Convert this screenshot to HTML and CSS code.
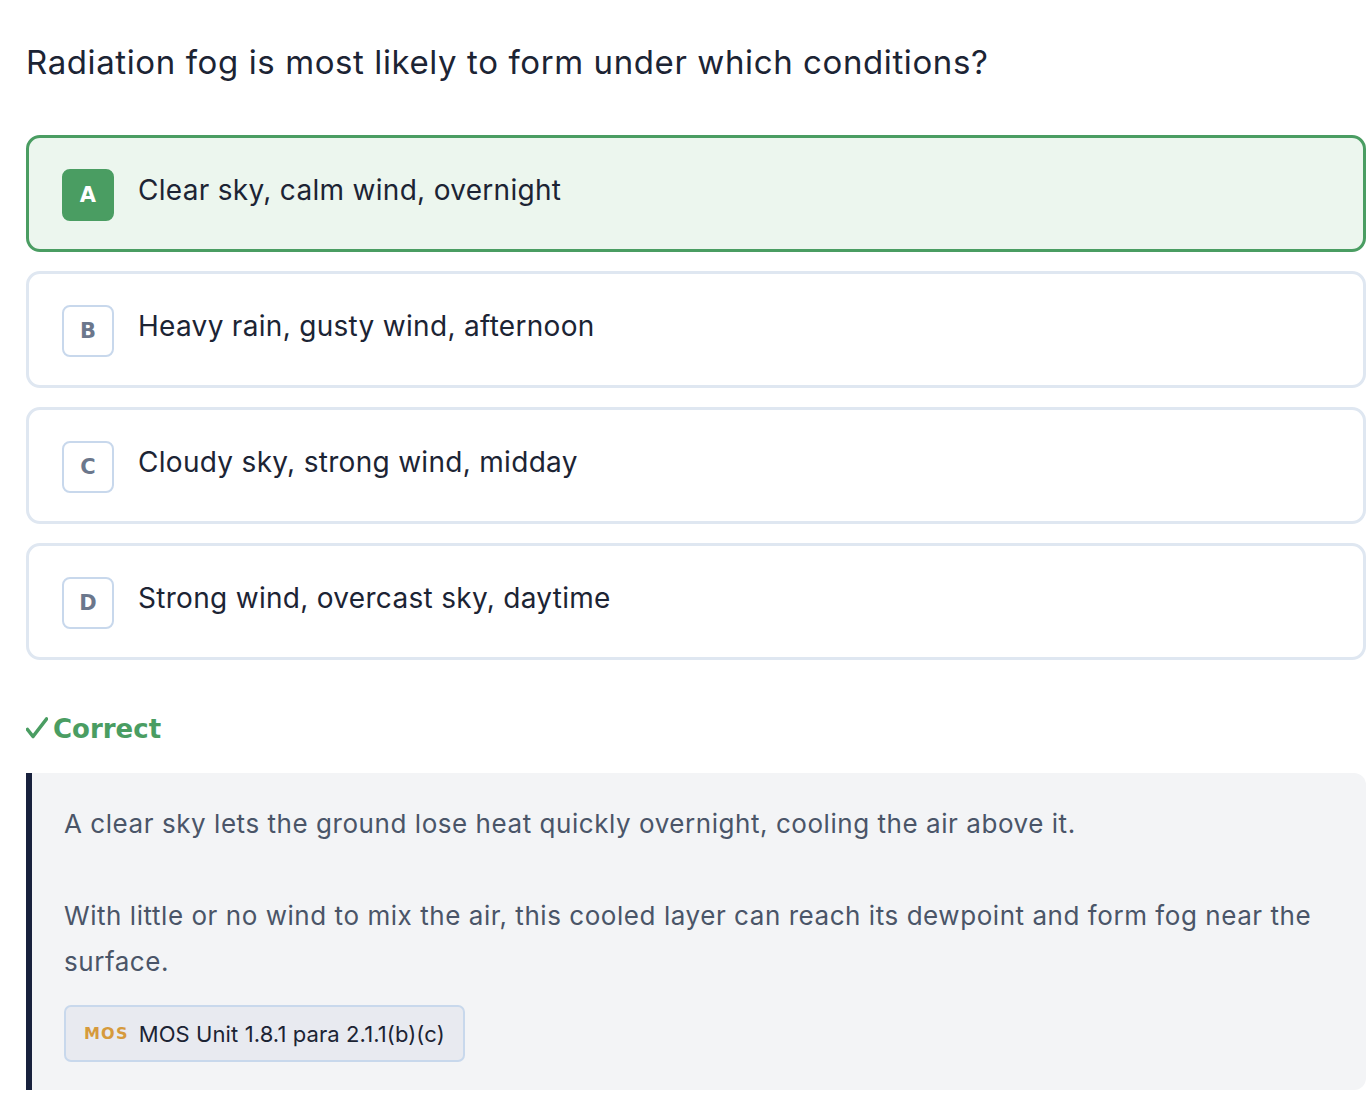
FILE: index.html
```html
<!DOCTYPE html>
<html>
<head>
<meta charset="utf-8">
<link rel="stylesheet" href="styles.css">
</head>
<body>
<main class="quiz">
  <h1 class="question">Radiation fog is most likely to form under which conditions?</h1>
  <div class="options">
    <div class="option selected"><span class="letter">A</span><span class="label">Clear sky, calm wind, overnight</span></div>
    <div class="option"><span class="letter">B</span><span class="label">Heavy rain, gusty wind, afternoon</span></div>
    <div class="option"><span class="letter">C</span><span class="label">Cloudy sky, strong wind, midday</span></div>
    <div class="option"><span class="letter">D</span><span class="label">Strong wind, overcast sky, daytime</span></div>
  </div>
  <div class="result"><svg class="check" width="22" height="22" viewBox="0 0 22 22"><path d="M1.5 12.5 L7 19.5 L20.5 2" fill="none" stroke="#4a9d62" stroke-width="3.6" stroke-linecap="round" stroke-linejoin="round"/></svg><span>Correct</span></div>
  <div class="explain">
    <p>A clear sky lets the ground lose heat quickly overnight, cooling the air above it.</p>
    <p>With little or no wind to mix the air, this cooled layer can reach its dewpoint and form fog near the surface.</p>
    <div class="ref"><span class="ref-tag">MOS</span><span class="ref-text">MOS Unit 1.8.1 para 2.1.1(b)(c)</span></div>
  </div>
</main>
</body>
</html>
```
FILE: styles.css
```css
* { box-sizing: border-box; }
html, body { margin: 0; padding: 0; background: #fff; }
body { font-family: Inter, "Noto Sans", sans-serif; color: #1c2434; }
.quiz { padding: 36px 2px 0 26px; }
.question { margin: 0; font-size: 33px; font-weight: 400; line-height: 52px; color: #1c2434; letter-spacing: 0.6px; }
.options { margin-top: 47px; display: flex; flex-direction: column; gap: 19px; }
.option { height: 117px; border: 3px solid #dfe7f1; border-radius: 14px; display: flex; align-items: center; padding: 0 0 0 33px; gap: 24px; background: #fff; }
.option .label { font-size: 28px; line-height: 36px; margin-top: -8px; letter-spacing: 0.3px; }
.letter { width: 52px; height: 52px; flex: 0 0 52px; border: 2px solid #c8d8ec; border-radius: 8px; display: flex; align-items: center; justify-content: center; font-family: "DejaVu Sans", sans-serif; font-weight: 700; font-size: 21px; color: #6b778c; margin-top: 2px; }
.option.selected { border-color: #4a9d62; background: #ecf6ee; }
.option.selected .letter { background: #4a9d62; border-color: #4a9d62; color: #fff; }
.result { margin-top: 52px; display: flex; align-items: center; gap: 5px; font-family: "DejaVu Sans", sans-serif; font-weight: 700; font-size: 26px; color: #4a9d62; line-height: 34px; }
.check { flex: 0 0 22px; margin-top: -2px; }
.explain { margin-top: 27px; background: #f3f4f6; border-left: 6px solid #18213d; border-radius: 0 12px 12px 0; padding: 28px 30px 28px 32px; color: #4a5568; }
.explain p { margin: 0 0 46px; font-size: 26px; line-height: 46px; letter-spacing: 0.55px; }
.explain p:nth-of-type(2) { margin-bottom: 20px; }
.ref { display: inline-flex; align-items: center; gap: 10px; height: 57px; padding: 0 18px; background: #e8eaf0; border: 2px solid #c8d8ec; border-radius: 7px; }
.ref-tag { font-family: "DejaVu Sans", sans-serif; font-weight: 700; font-size: 16px; letter-spacing: 1.2px; color: #d69a3c; }
.ref-text { font-size: 22px; color: #1c2434; letter-spacing: 0.1px; }
```
